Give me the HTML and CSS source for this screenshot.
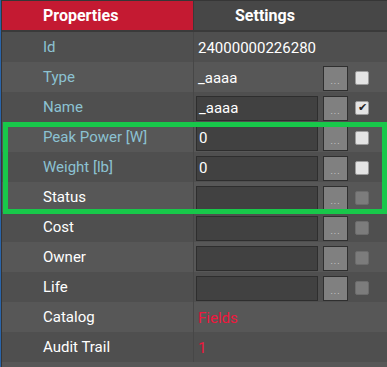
FILE: index.html
```html
<!DOCTYPE html>
<html lang="en">
<head>
    <meta charset="UTF-8">
    <title>Properties</title>
    <link rel="stylesheet" href="styles.css">
</head>
<body>
    <div class="panel">
        <div class="head">
            <div class="head-cell props">Properties</div>
            <div class="head-cell">Settings</div>
        </div>

        <div class="row">
            <div class="label blue">Id</div>
            <div class="value"><span class="plain">24000000226280</span></div>
        </div>
        <div class="row">
            <div class="label blue">Type</div>
            <div class="value">
                <span class="plain wide">_aaaa</span>
                <span class="dots">...</span>
                <span class="check"></span>
            </div>
        </div>
        <div class="row">
            <div class="label blue">Name</div>
            <div class="value">
                <span class="field">_aaaa</span>
                <span class="dots">...</span>
                <span class="check on">&#10004;</span>
            </div>
        </div>
        <div class="row">
            <div class="label blue">Peak Power [W]</div>
            <div class="value">
                <span class="field">0</span>
                <span class="dots">...</span>
                <span class="check"></span>
            </div>
        </div>
        <div class="row">
            <div class="label blue">Weight [lb]</div>
            <div class="value">
                <span class="field">0</span>
                <span class="dots">...</span>
                <span class="check"></span>
            </div>
        </div>
        <div class="row">
            <div class="label">Status</div>
            <div class="value">
                <span class="field"></span>
                <span class="dots">...</span>
                <span class="check off"></span>
            </div>
        </div>
        <div class="row">
            <div class="label">Cost</div>
            <div class="value">
                <span class="field"></span>
                <span class="dots">...</span>
                <span class="check off"></span>
            </div>
        </div>
        <div class="row">
            <div class="label">Owner</div>
            <div class="value">
                <span class="field"></span>
                <span class="dots">...</span>
                <span class="check off"></span>
            </div>
        </div>
        <div class="row">
            <div class="label">Life</div>
            <div class="value">
                <span class="field"></span>
                <span class="dots">...</span>
                <span class="check off"></span>
            </div>
        </div>
        <div class="row">
            <div class="label">Catalog</div>
            <div class="value"><span class="plain red">Fields</span></div>
        </div>
        <div class="row">
            <div class="label">Audit Trail</div>
            <div class="value"><span class="plain red">1</span></div>
        </div>
        <div class="row"></div>

        <!-- highlight box drawn over the rows -->
        <div class="highlight"></div>
    </div>
</body>
</html>
```

FILE: styles.css
```css
body {
    margin: 0;
    background-color: #333;
    font-family: Roboto, "Liberation Sans", sans-serif;
    color: #fff;
    overflow: hidden;
}
.panel {
    position: relative;
    border-left: 1px solid #2a64a8;
    padding-left: 1px;
    background-color: #363636;
    height: 367px;
    overflow: hidden;
}
.head {
    display: grid;
    grid-template-columns: 191px 1fr;
    column-gap: 1px;
    margin-top: 1px;
    border-bottom: 2px solid #3a3a3a;
    background-color: #3a3a3a;
}
.head-cell {
    height: 29px;
    line-height: 29px;
    padding-left: 41px;
    font-size: 16px;
    font-weight: bold;
    background-color: #474747;
}
.head-cell.props {
    background-color: #c41a32;
}
.row {
    display: grid;
    grid-template-columns: 192px 1fr;
    height: 30px;
    background-color: #4f4f4f;
}
.row:nth-of-type(odd) {
    background-color: #575757;
}
.label {
    padding-left: 41px;
    line-height: 30px;
    font-size: 15px;
    border-right: 1px solid #474747;
}
.label.blue {
    color: #8cc2d2;
}
.value {
    display: flex;
    align-items: flex-start;
    padding: 4px 0 0 2px;
    font-size: 15px;
}
.plain {
    line-height: 24px;
    padding-left: 2px;
}
.plain.wide {
    width: 125px;
}
.plain.red {
    color: #f0163c;
}
.field {
    box-sizing: border-box;
    width: 122px;
    height: 25px;
    margin-right: 5px;
    padding-left: 2px;
    line-height: 23px;
    background-color: #414141;
    border: 1px solid #2e2e2e;
}
.dots {
    box-sizing: border-box;
    width: 25px;
    height: 25px;
    margin-right: 7px;
    background-color: #808080;
    border: 1px solid #2f2f2f;
    color: #d8d8d8;
    font-size: 9px;
    line-height: 28px;
    text-align: center;
    letter-spacing: 1px;
}
.check {
    box-sizing: border-box;
    width: 14px;
    height: 14px;
    margin-top: 5px;
    border: 1px solid #9c9c9c;
    border-radius: 2px;
    background-color: #e4e4e4;
    color: #222;
    font-size: 11px;
    line-height: 12px;
    text-align: center;
}
.check.off {
    background-color: #7c7c7c;
    border-color: #6c6c6c;
}
.highlight {
    position: absolute;
    left: 2px;
    top: 122px;
    width: 384px;
    height: 92px;
    box-sizing: border-box;
    border: 5px solid #18c84a;
}
```
